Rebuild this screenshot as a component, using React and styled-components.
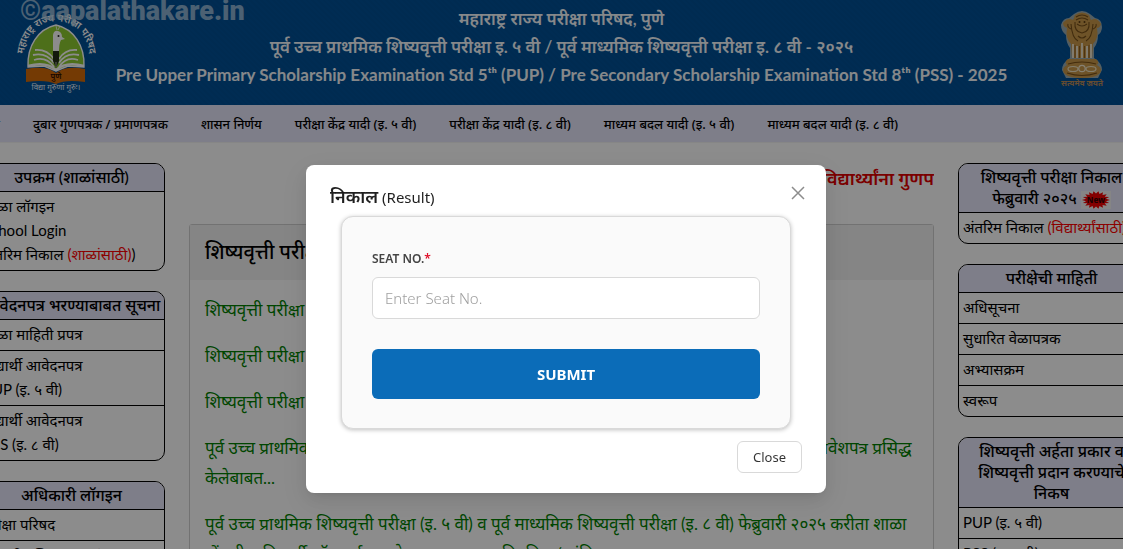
import React from "react";
import styled, { createGlobalStyle, css } from "styled-components";

const GlobalStyle = createGlobalStyle`
  *, *::before, *::after { box-sizing: border-box; }
  body { margin: 0; background: #fff; }
  body, button, input { font-family: Lato, "Noto Sans", sans-serif; }
  h1, h2, p, ul { margin: 0; padding: 0; font-weight: inherit; font-size: inherit; }
  ul { list-style: none; }
  a { color: inherit; text-decoration: none; }
`;

const Shell = styled.div`
  height: 100vh;
  overflow: hidden;
  color: #000;
`;

const Banner = styled.header`
  position: relative;
  display: grid;
  grid-template-columns: 80px 1fr 80px;
  align-items: start;
  padding: 5px 16px 14px;
  height: 105px;
  background: repeating-linear-gradient(45deg, #005098 0 2px, #004f94 2px 4px);
`;

const Watermark = styled.span`
  position: absolute;
  left: 20px;
  top: -6px;
  font: 900 27px/34px Roboto, sans-serif;
  color: #b8d2e6;
  opacity: 0.75;
`;

const BannerTitles = styled.div`
  text-align: center;
  color: #f4f8fc;
  font-weight: 600;
  font-size: 17px;
  line-height: 28px;
  white-space: nowrap;
  display: flex;
  flex-direction: column;
  align-items: center;
`;

const EnglishTitle = styled.p`
  && { font-weight: 700; }
`;

const LogoBox = styled.div`
  padding-top: 8px;
`;

const EmblemBox = styled.div`
  padding: 5px 2px 0 0;
  justify-self: end;
`;

const Nav = styled.nav`
  height: 38px;
  display: flex;
  align-items: center;
  gap: 33px;
  margin-left: -66px;
  padding-left: 27px;
  background: #e6e6fa;
  border-bottom: 1px solid #f4f4f4;
  font-family: "Noto Sans", sans-serif;
  font-size: 13px;
  font-weight: 500;
  white-space: nowrap;
`;

const Columns = styled.div`
  display: grid;
  grid-template-columns: 187px minmax(0, 1fr) 187px;
  gap: 24px;
  margin: 20px -22px 0;
`;

const Side = styled.aside`
  display: flex;
  flex-direction: column;
  gap: 20px;
`;

const Card = styled.section`
  border: 1px solid #000;
  border-radius: 10px;
  overflow: hidden;
`;

const CardTitle = styled.h2`
  padding: 2px 0 4px;
  background: #e6e6fa;
  text-align: center;
  font-size: 16px;
  font-weight: 500;
  line-height: 21px;
`;

const CardItem = styled.div`
  padding: 2px 4px 4px;
  border-top: 1px solid #000;
  font-size: 15px;
  line-height: 24px;
  white-space: nowrap;
  a { display: block; }
`;

const Red = styled.span`
  color: #f00;
`;

const Main = styled.main`
  min-width: 0;
`;

const Marquee = styled.p`
  display: flex;
  justify-content: flex-end;
  overflow: hidden;
  height: 61px;
  line-height: 30px;
  font-size: 18px;
  font-weight: 600;
  color: #e00000;
  white-space: nowrap;
`;

const Panel = styled.section`
  border: 1px solid #d0d0d0;
  border-radius: 3px;
`;

const PanelTitle = styled.h1`
  padding: 10px 15px;
  height: 55px;
  background: #f2f2f2;
  font-size: 20px;
  font-weight: 500;
  line-height: 32px;
`;

const Notices = styled.ul`
  display: flex;
  flex-direction: column;
  gap: 16px;
  padding: 15px;
  color: #008000;
  font-size: 17px;
  line-height: 30px;
`;

const Mask = styled.div`
  position: fixed;
  inset: 0;
  display: flex;
  justify-content: center;
  align-items: flex-start;
  padding: 165px 16px 24px 25px;
  background: rgba(0, 0, 0, 0.45);
`;

const Dialog = styled.div`
  width: 520px;
  padding: 20px 24px;
  background: #fff;
  border-radius: 8px;
  box-shadow: 0 6px 16px rgba(0, 0, 0, 0.08), 0 3px 6px -4px rgba(0, 0, 0, 0.12),
    0 9px 28px 8px rgba(0, 0, 0, 0.05);
  font-family: "Noto Sans", sans-serif;
`;

const DialogHead = styled.div`
  display: flex;
  justify-content: space-between;
  height: 31px;
  color: rgba(0, 0, 0, 0.88);
`;

const DialogTitle = styled.h2`
  font-size: 15px;
  line-height: 22px;
`;

const Strong = styled.strong`
  font-size: 18px;
  font-weight: 600;
`;

const CloseIcon = styled.button`
  width: 22px;
  height: 22px;
  margin: -3px -7px 0 0;
  padding: 4px;
  border: 0;
  background: none;
  color: rgba(0, 0, 0, 0.45);
  display: grid;
  place-items: center;
`;

const Form = styled.form`
  display: flex;
  flex-direction: column;
  margin: 0 11px;
  padding: 31px 30px 29px;
  background: #fafafa;
  border: 1px solid #d9d9d9;
  border-radius: 12px;
  box-shadow: 0 1px 4px rgba(0, 0, 0, 0.25);
`;

const Label = styled.label`
  font-size: 12px;
  font-weight: 600;
  line-height: 21px;
  color: #444;
`;

const Required = styled.span`
  color: #e0102a;
`;

const field = css`
  width: 100%;
  border-radius: 6px;
  font-family: "Noto Sans", sans-serif;
`;

const SeatInput = styled.input`
  ${field}
  height: 42px;
  margin-top: 8px;
  padding: 0 12px;
  border: 1px solid #d9d9d9;
  background: #fff;
  font-size: 15px;
  font-weight: 300;
  &::placeholder { color: #a0a0a0; }
`;

const Submit = styled.button`
  ${field}
  height: 50px;
  margin-top: 30px;
  border: 0;
  background: #0b6cb8;
  color: #fff;
  font-size: 15px;
  font-weight: 700;
`;

const DialogFoot = styled.div`
  display: flex;
  justify-content: flex-end;
  margin-top: 12px;
`;

const CloseButton = styled.button`
  height: 32px;
  padding: 0 15px;
  border: 1px solid #d9d9d9;
  border-radius: 6px;
  background: #fff;
  color: rgba(0, 0, 0, 0.8);
  font: 400 13px/20px "Noto Sans", sans-serif;
`;

function BoardLogo() {
  return (
    <svg width="80" height="80" viewBox="0 0 80 80" role="img" aria-label="महाराष्ट्र राज्य परीक्षा परिषद">
      <defs>
        <path id="arch" d="M7 46C9 18 24 9 41 8C58 9 72 20 74 46" />
      </defs>
      <text fontFamily="Noto Sans, sans-serif" fontSize="10" fontWeight="600" fill="#fff">
        <textPath href="#arch" startOffset="50%" textAnchor="middle">महाराष्ट्र राज्य परीक्षा परिषद</textPath>
      </text>
      <path d="M12 54C11 33 22 16 40 12C58 16 69 33 68 54L52 53L40 58L28 53Z" fill="#8dca30" stroke="#fff" strokeWidth="1.4" />
      <path d="M10 56Q30 52 40 60Q50 52 69 56V69Q50 66 40 71Q30 66 10 69Z" fill="#d46a08" />
      <path d="M12 53Q30 48 40 57Q50 48 68 53" fill="none" stroke="#fff" strokeWidth="2.4" />
      <path d="M37 39V22Q38 17 42 18Q46 19 46 24L49 26L45 27Q43 30 43 39Z" fill="#fff" />
      <circle cx="42.500" cy="23" r="1" fill="#222" />
      <path d="M41 17L40 13M42 17L44 13" stroke="#fff" strokeWidth="0.8" />
      <path d="M19 37Q31 36 38 46M17 42Q30 39 38 50M18 47Q30 43 38 54M61 37Q49 36 43 46M63 42Q50 39 43 50M62 47Q50 43 43 54" fill="none" stroke="#fff" strokeWidth="1.8" />
      <path d="M37 38H43V48L40 55L37 48Z" fill="#242f18" />
      <path d="M40 49V54" stroke="#fff" strokeWidth="0.6" />
      <text x="40" y="66" textAnchor="middle" fontFamily="Noto Sans, sans-serif" fontSize="8" fontWeight="600" fill="#301000">पुणे</text>
      <text x="40" y="77" textAnchor="middle" fontFamily="Noto Sans, sans-serif" fontSize="8" fill="#e6f0fa">विद्या गुरुणां गुरुः।</text>
    </svg>
  );
}

function Emblem() {
  return (
    <svg width="46" height="80" viewBox="0 0 46 80" role="img" aria-label="सत्यमेव जयते">
      <path d="M15 4Q23 -2 31 4L36 8Q43 9 43 17Q43 22 39 25Q39 33 35 38L35 48Q43 53 43 60L39 68H7L3 60Q3 53 11 48L11 38Q7 33 7 25Q2 21 2 15Q4 8 10 8Z" fill="#d9d2bd" opacity="0.7" />
      <path d="M16 5Q23 0 30 5L32 10Q38 7 42 14Q41 18 38 18Q40 28 34 34L33 48H13L12 34Q6 28 8 18Q4 17 4 13Q9 7 14 10Z" fill="#c8984a" />
      <path d="M17 7Q23 3 29 7M17 10Q23 6 29 10M18 14Q23 18 28 14M16 12Q15 22 23 23Q31 22 30 12M12 14Q13 28 19 31M34 14Q33 28 27 31M9 14Q8 17 12 19M37 14Q38 17 34 19M19 26Q23 30 27 26" fill="none" stroke="#77501a" strokeWidth="1.1" />
      <circle cx="20.500" cy="12" r="1" fill="#5a3a10" />
      <circle cx="25.500" cy="12" r="1" fill="#5a3a10" />
      <path d="M14 34V48M18 36V48M23 33V48M28 36V48M32 34V48" stroke="#f0e8d4" strokeWidth="1.8" />
      <path d="M16 35V48M20.500 36V48M25.500 36V48M30 35V48" stroke="#8a5e20" strokeWidth="1" />
      <path d="M9 49H37Q41 52 38 55Q45 59 40 64Q36 68 23 68Q10 68 6 64Q1 59 8 55Q5 52 9 49Z" fill="#c8984a" />
      <path d="M9 54Q23 50 37 54M8 63Q23 68 38 63" fill="none" stroke="#7a5018" strokeWidth="1.2" />
      <ellipse cx="14" cy="59" rx="5" ry="2.500" fill="none" stroke="#f0e4c4" strokeWidth="1.2" />
      <ellipse cx="32" cy="59" rx="5" ry="2.500" fill="none" stroke="#f0e4c4" strokeWidth="1.2" />
      <circle cx="23" cy="58.500" r="3.200" fill="none" stroke="#f5ead0" strokeWidth="1.2" />
      <text x="23" y="76" textAnchor="middle" fontFamily="Noto Sans, sans-serif" fontSize="8" fontWeight="700" fill="#b98a58">सत्यमेव जयते</text>
    </svg>
  );
}

const BadgeSvg = styled.svg`
  display: inline-block;
  margin: -2px 0;
  vertical-align: middle;
`;

function NewBadge() {
  const points = Array.from({ length: 36 }, (_, i) => {
    const a = (i * Math.PI) / 18;
    const k = i % 2 ? 0.72 : 1;
    return `${15 + 14 * k * Math.cos(a)},${9 + 9 * k * Math.sin(a)}`;
  }).join(" ");
  return (
    <BadgeSvg width="30" height="18" viewBox="0 0 30 18">
      <rect width="30" height="18" fill="#f3f3f3" />
      <polygon points={points} fill="#f00000" />
      <text x="15" y="12" textAnchor="middle" fontFamily="Noto Sans, sans-serif" fontSize="8" fontWeight="800" fill="#300">New</text>
    </BadgeSvg>
  );
}

function InfoCard({ title, items }) {
  return (
    <Card>
      <CardTitle>{title}</CardTitle>
      {items.map((lines, i) => (
        <CardItem key={i}>
          {lines.map((line, j) => <a href="#" key={j}>{line}</a>)}
        </CardItem>
      ))}
    </Card>
  );
}

const navLinks = [
  "मुख्यपृष्ठ",
  "दुबार गुणपत्रक / प्रमाणपत्रक",
  "शासन निर्णय",
  "परीक्षा केंद्र यादी (इ. ५ वी)",
  "परीक्षा केंद्र यादी (इ. ८ वी)",
  "माध्यम बदल यादी (इ. ५ वी)",
  "माध्यम बदल यादी (इ. ८ वी)",
];

const notices = [
  "शिष्यवृत्ती परीक्षा",
  "शिष्यवृत्ती परीक्षा",
  "शिष्यवृत्ती परीक्षा",
  "पूर्व उच्च प्राथमिक शिष्यवृत्ती परीक्षा (इ. ५ वी) व पूर्व माध्यमिक शिष्यवृत्ती परीक्षा (इ. ८ वी) चे ऑनलाईन प्रवेशपत्र प्रसिद्ध केलेबाबत...",
  "पूर्व उच्च प्राथमिक शिष्यवृत्ती परीक्षा (इ. ५ वी) व पूर्व माध्यमिक शिष्यवृत्ती परीक्षा (इ. ८ वी) फेब्रुवारी २०२५ करीता शाळा नोंदणी व विद्यार्थी ऑनलाईन आवेदनपत्र भरण्यास नियमित / अंतिम मुदतवाढ",
];

export default function App() {
  return (
    <>
      <GlobalStyle />
      <Shell>
        <Banner>
          <LogoBox><BoardLogo /></LogoBox>
          <BannerTitles>
            <p>महाराष्ट्र राज्य परीक्षा परिषद, पुणे</p>
            <p>पूर्व उच्च प्राथमिक शिष्यवृत्ती परीक्षा इ. ५ वी / पूर्व माध्यमिक शिष्यवृत्ती परीक्षा इ. ८ वी - २०२५</p>
            <EnglishTitle>Pre Upper Primary Scholarship Examination Std 5ᵗʰ (PUP) / Pre Secondary Scholarship Examination Std 8ᵗʰ (PSS) - 2025</EnglishTitle>
          </BannerTitles>
          <EmblemBox><Emblem /></EmblemBox>
          <Watermark>©aapalathakare.in</Watermark>
        </Banner>
        <Nav>
          {navLinks.map((text) => <a href="#" key={text}>{text}</a>)}
        </Nav>
        <Columns>
          <Side>
            <InfoCard
              title="उपक्रम (शाळांसाठी)"
              items={[["शाळा लॉगइन", "School Login", <>अंतरिम निकाल <Red>(शाळांसाठी)</Red>)</>]]}
            />
            <InfoCard
              title="आवेदनपत्र भरण्याबाबत सूचना"
              items={[["शाळा माहिती प्रपत्र"], ["विद्यार्थी आवेदनपत्र", "PUP (इ. ५ वी)"], ["विद्यार्थी आवेदनपत्र", "PSS (इ. ८ वी)"]]}
            />
            <InfoCard title="अधिकारी लॉगइन" items={[["परीक्षा परिषद"], ["विभागीय शिक्षण उपसंचालक"]]} />
          </Side>
          <Main>
            <Marquee>विद्यार्थ्यांना गुणप</Marquee>
            <Panel>
              <PanelTitle>शिष्यवृत्ती परीक्षा</PanelTitle>
              <Notices>
                {notices.map((text, i) => <li key={i}><a href="#">{text}</a></li>)}
              </Notices>
            </Panel>
          </Main>
          <Side>
            <InfoCard
              title={<>शिष्यवृत्ती परीक्षा निकाल फेब्रुवारी २०२५ <NewBadge /></>}
              items={[[<>अंतरिम निकाल <Red>(विद्यार्थ्यांसाठी)</Red></>]]}
            />
            <InfoCard title="परीक्षेची माहिती" items={[["अधिसूचना"], ["सुधारित वेळापत्रक"], ["अभ्यासक्रम"], ["स्वरूप"]]} />
            <InfoCard title="शिष्यवृत्ती अर्हता प्रकार व शिष्यवृत्ती प्रदान करण्याचे निकष" items={[["PUP (इ. ५ वी)"], ["PSS (इ. ८ वी)"]]} />
          </Side>
        </Columns>
      </Shell>
      <Mask>
        <Dialog role="dialog" aria-modal="true" aria-labelledby="result-title">
          <DialogHead>
            <DialogTitle id="result-title"><Strong>निकाल</Strong> (Result)</DialogTitle>
            <CloseIcon type="button" aria-label="Close dialog">
              <svg width="14" height="14" viewBox="0 0 14 14">
                <path d="M1 1L13 13M13 1L1 13" stroke="currentColor" strokeWidth="1.500" fill="none" />
              </svg>
            </CloseIcon>
          </DialogHead>
          <Form onSubmit={(e) => e.preventDefault()}>
            <Label htmlFor="seat">SEAT NO.<Required>*</Required></Label>
            <SeatInput id="seat" type="text" placeholder="Enter Seat No." />
            <Submit type="submit">SUBMIT</Submit>
          </Form>
          <DialogFoot>
            <CloseButton type="button">Close</CloseButton>
          </DialogFoot>
        </Dialog>
      </Mask>
    </>
  );
}
